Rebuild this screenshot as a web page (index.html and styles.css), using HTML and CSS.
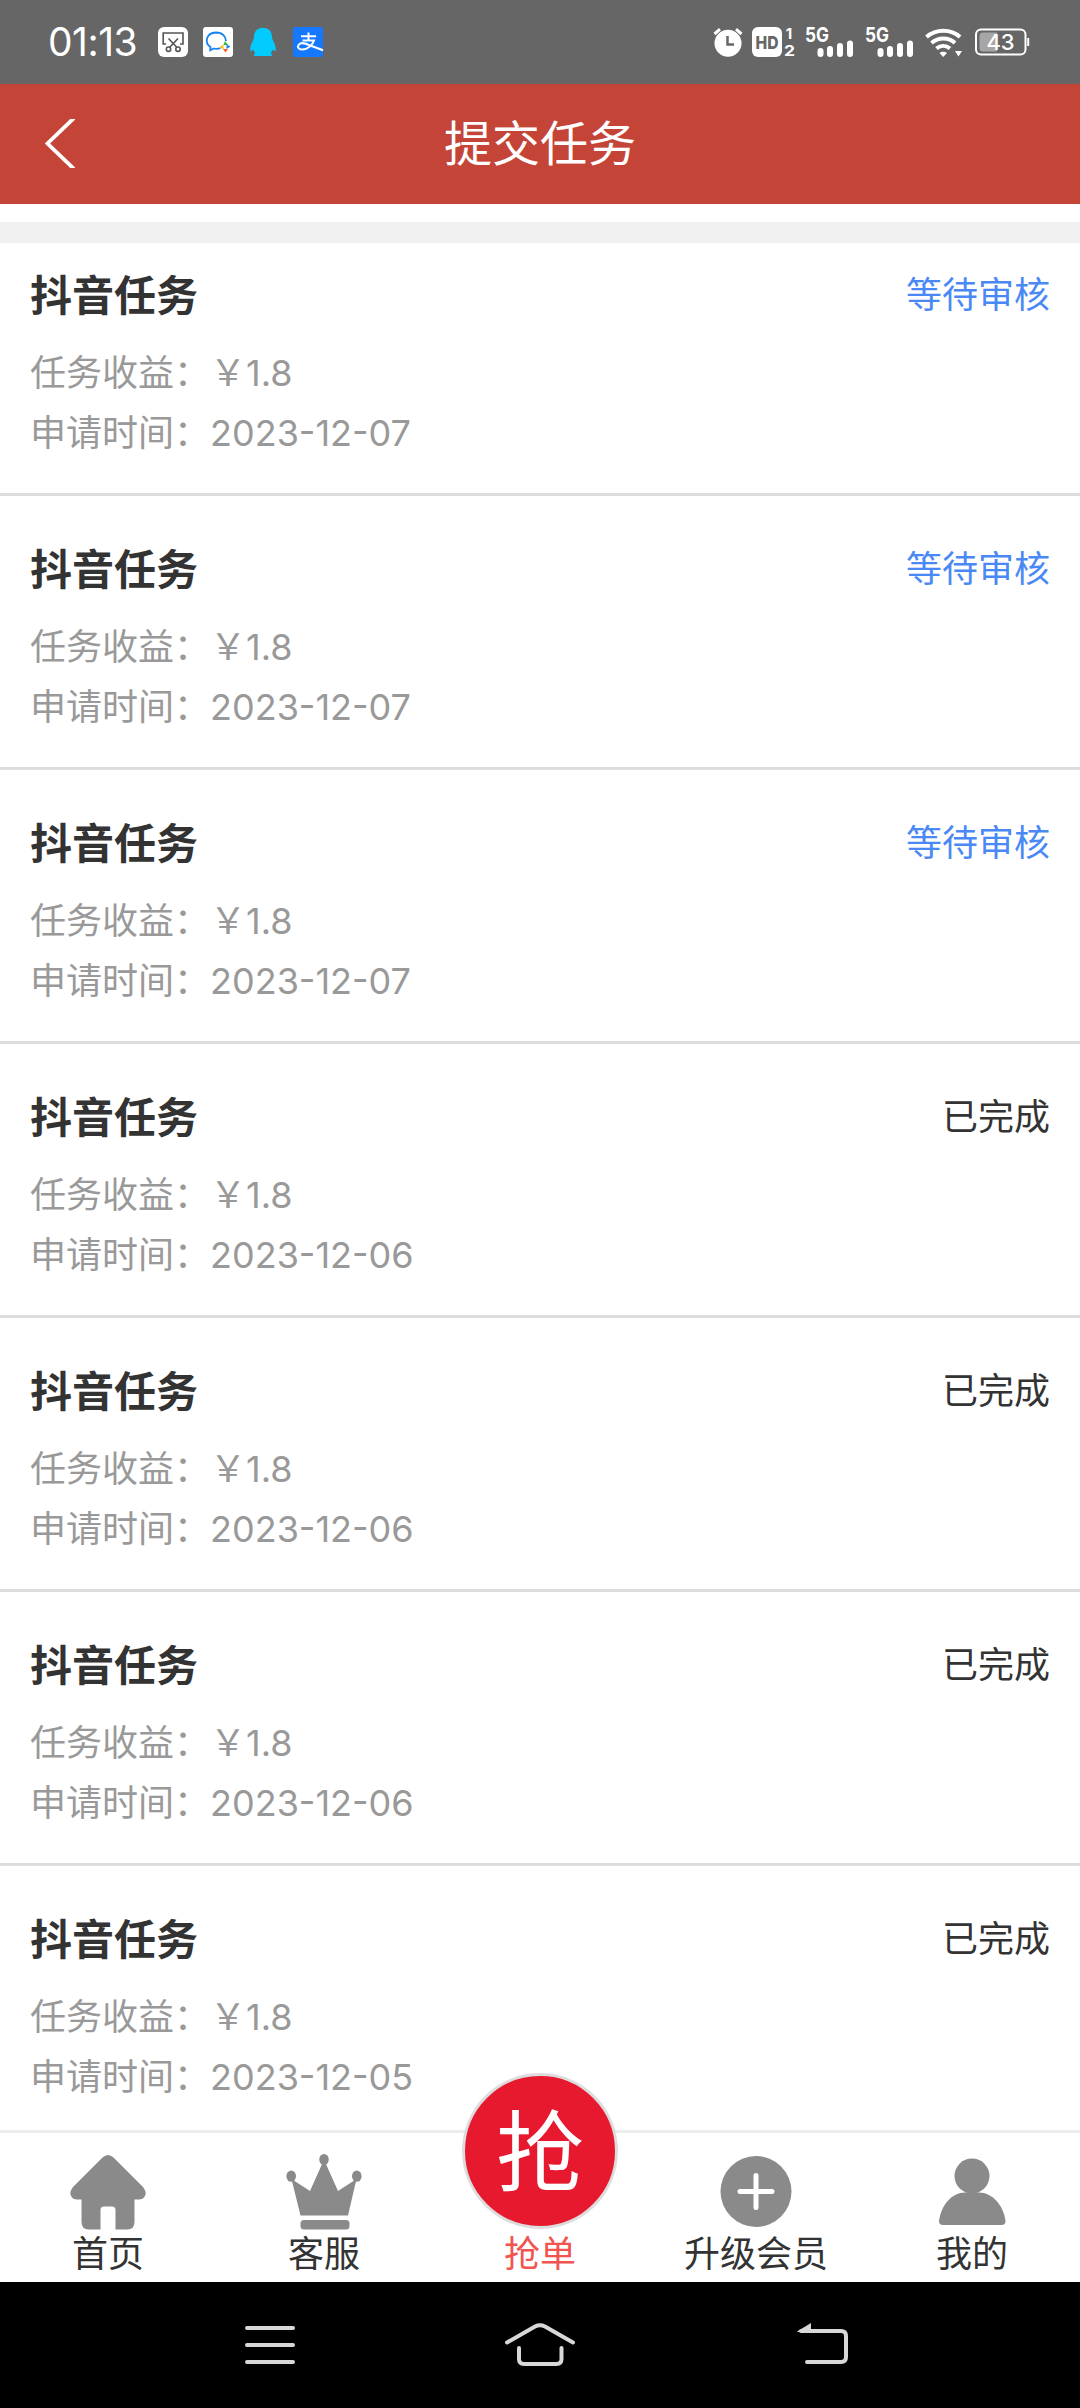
FILE: index.html
```html
<!DOCTYPE html>
<html lang="zh-CN">
<head>
  <meta charset="UTF-8">
  <meta name="viewport" content="width=device-width, initial-scale=1.0">
  <title>提交任务</title>
  <link rel="stylesheet" href="styles.css">
</head>
<body>

<!-- Status Bar -->
<div class="status-bar">
  <div class="status-left">
    <span class="time">01:13</span>
    <svg class="app-icon" width="30" height="30" viewBox="0 0 30 30">
      <rect width="30" height="30" rx="6" fill="#fff"/>
      <g fill="none" stroke="#555" stroke-width="1.6">
        <path d="M8 17H5.2V6H25V17H22"/>
        <path d="M10.5 11.5L19 20.5M20 11.5L11.5 20.5"/>
        <circle cx="10.5" cy="22.2" r="2.2"/>
        <circle cx="20" cy="22.2" r="2.2"/>
      </g>
    </svg>
    <svg class="app-icon" width="30" height="30" viewBox="0 0 30 30">
      <rect width="30" height="30" rx="3" fill="#fff"/>
      <path d="M17.5 21.2C15 22 12.8 22 11 21.5L7.2 23.2L7.5 20C1.5 16 2.5 6 13 5.5C19.5 5.5 23 9.5 23 14" fill="none" stroke="#1485ee" stroke-width="1.8"/>
      <path d="M22 14L25 18H20.500Z" fill="#2fbb3a"/>
      <path d="M27.5 19.500L23.500 22L23.500 17.500Z" fill="#1485ee"/>
      <path d="M22.500 25.500L20 22H25Z" fill="#fa5a28"/>
      <path d="M16.500 20L20.500 17.500L20.500 22.500Z" fill="#fbbc14"/>
    </svg>
    <svg class="app-icon" width="30" height="30" viewBox="0 0 30 30">
      <path d="M15 .8C20.500 .8 24 4.500 24 10C24 13 27.800 17 27.800 22.500C27.800 24.800 26.500 24.500 24.800 22.500C24.300 24 23.500 25 22.500 26C24 27 24.500 28 23.500 29H6.500C5.500 28 6 27 7.500 26C6.500 25 5.700 24 5.200 22.500C3.500 24.500 2.200 24.800 2.200 22.500C2.200 17 6 13 6 10C6 4.500 9.500 .8 15 .8Z" fill="#04cbfe"/>
    </svg>
    <svg class="app-icon" width="30" height="30" viewBox="0 0 30 30">
      <rect width="30" height="30" rx="2" fill="#1677ff"/>
      <g fill="none" stroke="#fff" stroke-width="2">
        <path d="M8 9.200H23M15.500 5.500V13.500M9.500 13.500H21C19.500 18 14.500 22.800 9 22.600C5.500 22.500 4.200 20 5.500 18C7.500 15.500 12 16 16 18L30 23.200"/>
      </g>
    </svg>
  </div>
  <div class="status-right">
    <svg class="alarm" width="30" height="30" viewBox="0 0 30 30">
      <circle cx="15" cy="16.200" r="13.500" fill="#fff"/>
      <path d="M1.500 7L7 2.200M28.500 7L23 2.200" stroke="#fff" stroke-width="3"/>
      <path d="M14.500 9V17.500H21" fill="none" stroke="#666" stroke-width="2.500"/>
    </svg>
    <svg class="hd" width="44" height="30" viewBox="0 0 44 30">
      <rect width="30" height="30" rx="6" fill="#fff"/>
      <text x="3.500" y="21.500" class="hd-text" textLength="23" lengthAdjust="spacingAndGlyphs">HD</text>
      <text x="37" y="11.500" class="hd-sim">1</text>
      <text x="32" y="28.500" class="hd-sim-two" textLength="11" lengthAdjust="spacingAndGlyphs">2</text>
    </svg>
    <svg class="signal" width="50" height="30" viewBox="0 0 50 30">
      <text x="0" y="14.500" class="net" textLength="24" lengthAdjust="spacingAndGlyphs">5G</text>
      <path d="M15.500 24V27M25 22V27M35 19V27M45 16.500V27" stroke="#fff" stroke-width="6" stroke-linecap="round"/>
    </svg>
    <svg class="signal" width="50" height="30" viewBox="0 0 50 30">
      <text x="0" y="14.500" class="net" textLength="24" lengthAdjust="spacingAndGlyphs">5G</text>
      <path d="M15.500 24V27M25 22V27M35 19V27M45 16.500V27" stroke="#fff" stroke-width="6" stroke-linecap="round"/>
    </svg>
    <svg class="wifi" width="38" height="30" viewBox="0 0 38 30">
      <g fill="none" stroke="#fff" stroke-width="4">
        <path d="M1.500 10C11 1.700 26 1.700 35 10"/>
        <path d="M6.500 16C13.500 10 23.500 10 30 16"/>
        <path d="M11.500 21.500C15.500 18 21 18 25 21.500"/>
      </g>
      <path d="M14.500 26C16.500 24.200 20 24.200 22 26L18.200 30Z" fill="#fff"/>
      <path d="M30 24H37L33.500 29.500Z" fill="#fff"/>
    </svg>
    <svg class="battery" width="56" height="28" viewBox="0 0 56 28">
      <rect x="1" y="1.500" width="49.500" height="25" rx="5" fill="none" stroke="#fff" stroke-width="2"/>
      <path d="M8 4.500H22V23.500H8Q4.500 23.500 4.500 20V8Q4.500 4.500 8 4.500Z" fill="#a6a6a6"/>
      <path d="M53.200 10V18" stroke="#fff" stroke-width="2"/>
      <text x="25.500" y="22" class="battery-text">43</text>
    </svg>
  </div>
</div>

<!-- Header -->
<div class="header">
  <svg class="back" width="30" height="49" viewBox="0 0 30 49">
    <path d="M29 -1L2.500 24.500L29 50" fill="none" stroke="#fff" stroke-width="3.800"/>
  </svg>
  <h1>提交任务</h1>
</div>
<div class="divider"></div>

<!-- Task List -->
<div class="task-list">
  <div class="task">
    <div class="task-top"><h2>抖音任务</h2><span class="state pending">等待审核</span></div>
    <p>任务收益：￥1.8</p>
    <p>申请时间：<span class="date">2023-12-07</span></p>
  </div>
  <div class="task">
    <div class="task-top"><h2>抖音任务</h2><span class="state pending">等待审核</span></div>
    <p>任务收益：￥1.8</p>
    <p>申请时间：<span class="date">2023-12-07</span></p>
  </div>
  <div class="task">
    <div class="task-top"><h2>抖音任务</h2><span class="state pending">等待审核</span></div>
    <p>任务收益：￥1.8</p>
    <p>申请时间：<span class="date">2023-12-07</span></p>
  </div>
  <div class="task">
    <div class="task-top"><h2>抖音任务</h2><span class="state">已完成</span></div>
    <p>任务收益：￥1.8</p>
    <p>申请时间：<span class="date">2023-12-06</span></p>
  </div>
  <div class="task">
    <div class="task-top"><h2>抖音任务</h2><span class="state">已完成</span></div>
    <p>任务收益：￥1.8</p>
    <p>申请时间：<span class="date">2023-12-06</span></p>
  </div>
  <div class="task">
    <div class="task-top"><h2>抖音任务</h2><span class="state">已完成</span></div>
    <p>任务收益：￥1.8</p>
    <p>申请时间：<span class="date">2023-12-06</span></p>
  </div>
  <div class="task">
    <div class="task-top"><h2>抖音任务</h2><span class="state">已完成</span></div>
    <p>任务收益：￥1.8</p>
    <p>申请时间：<span class="date">2023-12-05</span></p>
  </div>
</div>

<!-- Tab Bar -->
<div class="tab-bar">
  <div class="tab">
    <svg width="76" height="78" viewBox="0 0 76 78">
      <path d="M32.500 3.500Q38 -1.500 43.500 3.500L73 33Q77 38 75 42Q73 45.500 69 45.500H64.500V68Q64.500 75.500 57 75.500H45.500V56Q45.500 52.500 42 52.500H34Q30.500 52.500 30.500 56V75.500H19Q11.500 75.500 11.500 68V45.500H7Q3 45.500 1 42Q-1 38 3 33Z" fill="#8a8a8a"/>
    </svg>
    <span>首页</span>
  </div>
  <div class="tab">
    <svg width="76" height="78" viewBox="0 0 76 78">
      <g fill="#8a8a8a">
        <ellipse cx="38" cy="5.500" rx="4.700" ry="5.500"/>
        <ellipse cx="5.200" cy="22.200" rx="4.800" ry="5.600"/>
        <ellipse cx="70.800" cy="22.200" rx="4.800" ry="5.600"/>
        <path d="M5.500 25L24 37L36.500 9H39.500L52 37L70.500 25L62 61.500H14.500Z"/>
        <rect x="14.500" y="66" width="49" height="9.500" rx="3.500"/>
      </g>
    </svg>
    <span>客服</span>
  </div>
  <div class="tab active">
    <div class="grab">抢</div>
    <span>抢单</span>
  </div>
  <div class="tab">
    <svg width="76" height="78" viewBox="0 0 76 78">
      <circle cx="38" cy="37.500" r="35.500" fill="#8a8a8a"/>
      <path d="M38 21.500V53.500M22 37.500H54" stroke="#fff" stroke-width="5" stroke-linecap="round"/>
    </svg>
    <span>升级会员</span>
  </div>
  <div class="tab">
    <svg width="76" height="78" viewBox="0 0 76 78">
      <g fill="#8a8a8a">
        <circle cx="38" cy="22" r="17.500"/>
        <path d="M5 67C7 51 18 38.500 31 38.500H45C58 38.500 69.500 51 71.500 67Q71.500 71 67.500 71H9Q5 71 5 67Z"/>
      </g>
    </svg>
    <span>我的</span>
  </div>
</div>

<!-- System Navigation -->
<div class="nav-bar">
  <svg width="76" height="46" viewBox="0 0 76 46">
    <path d="M15 5H61M15 22H61M15 39H61" stroke="#d8d8d8" stroke-width="4" stroke-linecap="round"/>
  </svg>
  <svg width="76" height="46" viewBox="0 0 76 46">
    <path d="M5 19.500L33 3.500Q38 1 43 3.500L71 19.500M17 25V36Q17 41 22 41H54.500Q59.500 41 59.500 36V25" fill="none" stroke="#d8d8d8" stroke-width="4" stroke-linecap="round"/>
  </svg>
  <svg width="76" height="46" viewBox="0 0 76 46">
    <path d="M29 8H69Q74 8 74 13V34Q74 39 69 39H35" fill="none" stroke="#d8d8d8" stroke-width="4" stroke-linecap="round"/>
    <path d="M25 8.500L39 0V9H26Z" fill="#d8d8d8"/>
  </svg>
</div>

</body>
</html>
```
FILE: styles.css
```css
/* Global Styling */
* {
  box-sizing: border-box;
  margin: 0;
  padding: 0;
}

body {
  display: flex;
  flex-direction: column;
  width: 1080px;
  height: 2408px;
  overflow: hidden;
  background: #fff;
  color: #333;
  font-family: Inter, 'Noto Sans CJK SC', sans-serif;
  font-size: 36px;
}

svg {
  display: block;
  flex: none;
  overflow: visible;
}

/* Status Bar */
.status-bar {
  display: flex;
  flex: none;
  justify-content: space-between;
  align-items: center;
  height: 84px;
  padding: 0 49px 0 48px;
  background: #666;
  color: #fff;
}

.status-left, .status-right {
  display: flex;
  align-items: center;
}

.time {
  width: 110px;
  font-size: 39px;
  line-height: 84px;
  letter-spacing: -0.5px;
  white-space: nowrap;
}

.app-icon {
  margin-right: 15px;
}

.alarm {
  margin-right: 9px;
}

.hd {
  margin-right: 9px;
}

.signal {
  margin-right: 10px;
}

.wifi {
  margin-right: 12px;
}

.hd-text {
  font-size: 18px;
  font-weight: 800;
  fill: #666;
}

.hd-sim, .hd-sim-two {
  font-size: 15px;
  font-weight: 700;
  fill: #fff;
}

.hd-sim {
  text-anchor: middle;
}

.net {
  font-size: 20px;
  font-weight: 700;
  fill: #fff;
}

.battery-text {
  font-size: 22px;
  font-weight: 500;
  fill: #fff;
  text-anchor: middle;
}

/* Header */
.header {
  position: relative;
  display: flex;
  flex: none;
  justify-content: center;
  align-items: center;
  height: 120px;
  background: #c44537;
  color: #fff;
}

.header h1 {
  font-size: 48px;
  font-weight: 400;
  line-height: 120px;
}

.back {
  position: absolute;
  left: 45px;
  top: 35px;
  overflow: hidden;
}

.divider {
  flex: none;
  height: 21px;
  margin-top: 18px;
  background: #f0f0f0;
}

/* Task List */
.task-list {
  flex: 1;
  min-height: 0;
  overflow: hidden;
}

.task {
  height: 274px;
  padding: 43px 30px 0;
  border-bottom: 3px solid #dcdddd;
}

.task:first-child {
  height: 253px;
  padding-top: 22px;
}

.task-top {
  display: flex;
  justify-content: space-between;
  height: 78px;
  line-height: 62px;
}

.task h2 {
  font-size: 42px;
  font-weight: 700;
}

.task p {
  line-height: 60px;
  color: #999;
}

.state {
  line-height: 60px;
}

.pending {
  color: #4a89f5;
}

/* Tab Bar */
.tab-bar {
  display: flex;
  flex: none;
  height: 152px;
  border-top: 3px solid #ededed;
}

.tab {
  position: relative;
  display: flex;
  flex: 1;
  flex-direction: column;
  align-items: center;
  padding-top: 21px;
}

.tab span {
  line-height: 44px;
}

.tab.active {
  padding-top: 99px;
  color: #f25450;
}

/* Raised round button over the bar */
.grab {
  position: absolute;
  top: -60px;
  left: 30px;
  width: 156px;
  height: 156px;
  border: 3px solid #ddd;
  border-radius: 50%;
  background: #e7192e;
  color: #fff;
  font-size: 88px;
  line-height: 152px;
  text-align: center;
}

/* System Navigation */
.nav-bar {
  display: flex;
  flex: none;
  justify-content: center;
  gap: 194px;
  height: 126px;
  padding-top: 41px;
  background: #000;
}
```
